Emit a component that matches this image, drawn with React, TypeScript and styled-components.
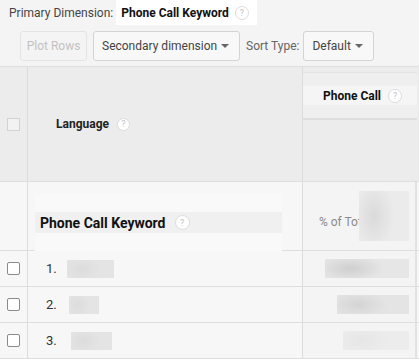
import React from 'react';
import styled, { createGlobalStyle } from 'styled-components';

const GlobalStyle = createGlobalStyle`
    html, body {
        margin: 0;
        padding: 0;
        background: #f6f6f6;
        font-family: Roboto, 'Liberation Sans', Arial, sans-serif;
        font-size: 12px;
        color: #333;
    }
`;

const Page = styled.div`
    width: 419px;
    height: 359px;
    overflow: hidden;
    background: #f6f6f6;
`;

const TopBar = styled.div`
    display: flex;
    align-items: stretch;
    height: 25px;
    background: #f4f4f4;
`;

const TopLabel = styled.div`
    display: flex;
    align-items: center;
    padding: 0 3px 0 9px;
    color: #444;
`;

const TopValue = styled.div`
    display: flex;
    align-items: center;
    gap: 6px;
    padding: 0 8px 0 5px;
    background: #fff;
    font-weight: 700;
    color: #111;
`;

const Help = styled.span<{ $size?: number }>`
    display: inline-flex;
    align-items: center;
    justify-content: center;
    width: ${(p) => p.$size ?? 13}px;
    height: ${(p) => p.$size ?? 13}px;
    border-radius: 50%;
    border: 1px solid #dcdcdc;
    background: #fff;
    color: #c4c4c4;
    font-size: 9px;
    font-weight: 400;
    box-sizing: border-box;
`;

const Toolbar = styled.div`
    display: flex;
    align-items: center;
    gap: 6px;
    height: 42px;
    padding: 0 0 0 20px;
    background: #f4f4f4;
    border-bottom: 1px solid #dedede;
    box-sizing: border-box;
`;

const Button = styled.div<{ $disabled?: boolean; $width: number }>`
    display: flex;
    align-items: center;
    justify-content: ${(p) => (p.$disabled ? 'center' : 'space-between')};
    box-sizing: border-box;
    width: ${(p) => p.$width}px;
    height: 30px;
    padding: 0 8px;
    border: 1px solid ${(p) => (p.$disabled ? '#e4e4e4' : '#d4d4d4')};
    border-radius: 3px;
    background: ${(p) => (p.$disabled ? '#f4f4f4' : '#f8f8f8')};
    color: ${(p) => (p.$disabled ? '#c2c2c2' : '#444')};
    font-size: 12px;
    white-space: nowrap;
`;

const Caret = styled.span`
    width: 0;
    height: 0;
    border-left: 4px solid transparent;
    border-right: 4px solid transparent;
    border-top: 4px solid #666;
    margin-right: 2px;
`;

const ToolLabel = styled.span`
    color: #666;
    margin-right: -2px;
`;

const Row = styled.div<{ $height: number; $bg?: string }>`
    display: grid;
    grid-template-columns: 28px 275px 114px;
    height: ${(p) => p.$height}px;
    border-bottom: 1px solid #dedede;
    background: ${(p) => p.$bg ?? '#f7f7f7'};
    box-sizing: border-box;
`;

const Cell = styled.div<{ $bg?: string; $right?: boolean }>`
    position: relative;
    display: flex;
    align-items: center;
    border-right: ${(p) => (p.$right ? 'none' : '1px solid #dcdcdc')};
    background: ${(p) => p.$bg ?? 'transparent'};
    box-sizing: border-box;
    min-width: 0;
`;

const LastCell = styled(Cell)`
    border-right: 2px solid #e2e2e2;
    justify-content: flex-end;
    padding-right: 6px;
`;

const Checkbox = styled.span<{ $disabled?: boolean }>`
    display: block;
    width: 13px;
    height: 13px;
    margin-left: 7px;
    border: 1px solid ${(p) => (p.$disabled ? '#d2d2d2' : '#8a8a8a')};
    border-radius: ${(p) => (p.$disabled ? 0 : 2)}px;
    background: ${(p) => (p.$disabled ? '#f2f2f2' : '#fff')};
    box-sizing: border-box;
`;

const HeadTitle = styled.div`
    display: flex;
    align-items: center;
    gap: 8px;
    padding-left: 28px;
    font-weight: 700;
    color: #222;
`;

const MetricHead = styled.div`
    display: flex;
    flex-direction: column;
    align-self: stretch;
    width: 100%;
    margin-top: 5px;
`;

const MetricTop = styled.div`
    height: 48px;
    border-top: 1px solid #e4e4e4;
    border-bottom: 2px solid #dedede;
    background: #efefef;
    display: flex;
    align-items: center;
    box-sizing: border-box;
`;

const MetricLabel = styled.div`
    display: flex;
    align-items: center;
    gap: 7px;
    width: 100%;
    height: 19px;
    padding-left: 20px;
    background: #f5f5f5;
    font-weight: 700;
    color: #111;
`;

const Overlay = styled.div`
    position: absolute;
    left: 7px;
    top: 12px;
    right: 20px;
    bottom: -1px;
    background: #f9f9f9;
    display: flex;
    align-items: center;
`;

const OverlayStrip = styled.div`
    display: flex;
    align-items: center;
    gap: 9px;
    width: 100%;
    height: 21px;
    padding-left: 5px;
    background: #f0f0f0;
    font-size: 14px;
    font-weight: 700;
    color: #111;
`;

const PercentLabel = styled.span`
    position: absolute;
    left: 16px;
    top: 33px;
    color: #8a8a8a;
    font-size: 12px;
`;

const Blur = styled.div<{ $w: number; $h: number; $tone: string; $base?: string }>`
    position: relative;
    width: ${(p) => p.$w}px;
    height: ${(p) => p.$h}px;
    background: radial-gradient(
        ellipse 40% 70% at 30% 50%,
        ${(p) => p.$tone} 0%,
        ${(p) => p.$base ?? '#e6e6e6'} 100%
    );
`;

const KeyCell = styled(Cell)`
    gap: 10px;
    padding-left: 18px;
    color: #333;
    font-size: 13px;
`;

const rows = [
    { n: '1.', w: 47, dx: 0, metric: 84, tone: '#cfcfcf', base: '#e6e6e6' },
    { n: '2.', w: 30, dx: 2, metric: 72, tone: '#d4d4d4', base: '#e4e4e4' },
    { n: '3.', w: 41, dx: 4, metric: 66, tone: '#e6e6e6', base: '#ececec' },
];

export default function App() {
    return (
        <Page>
            <GlobalStyle />
            <TopBar>
                <TopLabel>Primary Dimension:</TopLabel>
                <TopValue>
                    Phone Call Keyword <Help $size={14}>?</Help>
                </TopValue>
            </TopBar>
            <Toolbar>
                <Button $disabled $width={67}>Plot Rows</Button>
                <Button $width={147}>
                    Secondary dimension <Caret />
                </Button>
                <ToolLabel>Sort Type:</ToolLabel>
                <Button $width={71}>
                    Default <Caret />
                </Button>
            </Toolbar>
            <Row $height={115} $bg="#ececec">
                <Cell>
                    <Checkbox $disabled />
                </Cell>
                <Cell>
                    <HeadTitle>
                        Language <Help>?</Help>
                    </HeadTitle>
                </Cell>
                <Cell $right>
                    <MetricHead>
                        <MetricTop>
                            <MetricLabel>
                                Phone Call <Help $size={14}>?</Help>
                            </MetricLabel>
                        </MetricTop>
                    </MetricHead>
                </Cell>
            </Row>
            <Row $height={69}>
                <Cell />
                <Cell>
                    <Overlay>
                        <OverlayStrip>
                            Phone Call Keyword <Help $size={15}>?</Help>
                        </OverlayStrip>
                    </Overlay>
                </Cell>
                <LastCell $bg="#f4f4f4">
                    <PercentLabel>% of Tot</PercentLabel>
                    <Blur $w={50} $h={50} $tone="#dadada" $base="#ebebeb" />
                </LastCell>
            </Row>
            {rows.map((r) => (
                <Row key={r.n} $height={36}>
                    <Cell>
                        <Checkbox />
                    </Cell>
                    <KeyCell>
                        {r.n}
                        <Blur $w={r.w} $h={18} $tone="#dcdcdc" $base="#e4e4e4" style={{ marginLeft: r.dx }} />
                    </KeyCell>
                    <LastCell $bg="#f4f4f4">
                        <Blur $w={r.metric} $h={19} $tone={r.tone} $base={r.base} />
                    </LastCell>
                </Row>
            ))}
        </Page>
    );
}
